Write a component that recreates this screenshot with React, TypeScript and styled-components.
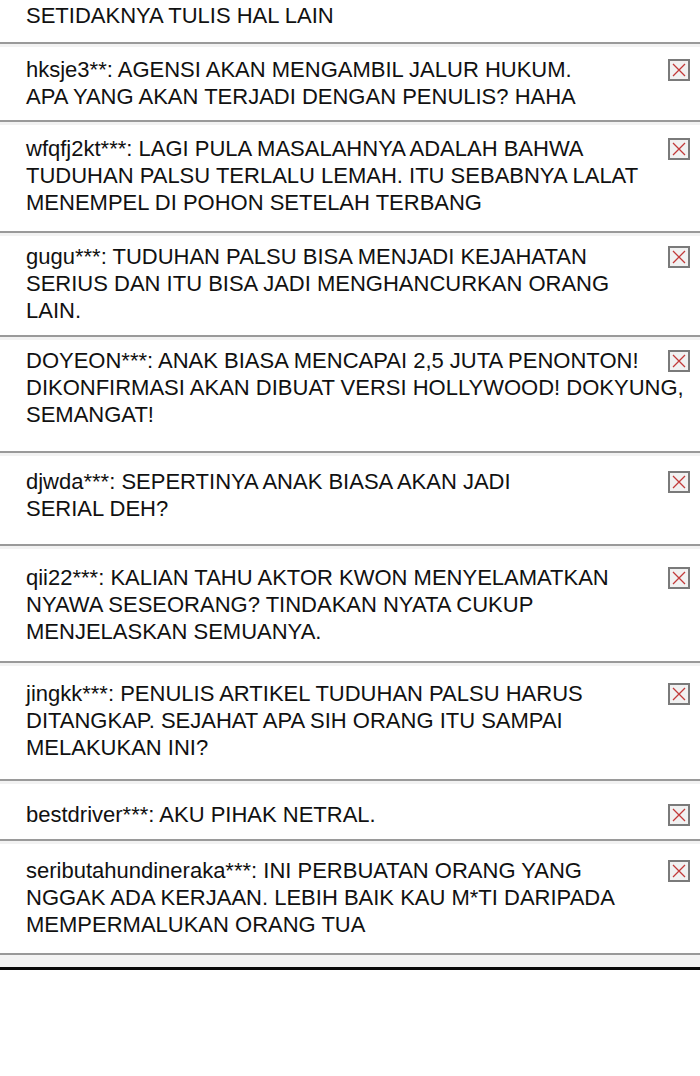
import styled, { createGlobalStyle } from 'styled-components';

const GlobalStyle = createGlobalStyle`
  html, body {
    margin: 0;
    padding: 0;
    background: #ffffff;
  }
  body {
    width: 700px;
    height: 1076px;
    overflow: hidden;
    font-family: "Liberation Sans", Arial, sans-serif;
  }
`;

const List = styled.div`
  display: flex;
  flex-direction: column;
  width: 700px;
`;

const Card = styled.div<{ $top: number; $bottom: number; $strip?: boolean }>`
  background: #ffffff;
  border-top: ${({ $strip }) => ($strip ? '3px solid #f2f2f2' : 'none')};
  padding: ${({ $top, $bottom }) => `${$top}px 10px ${$bottom}px 26px`};
  color: #111111;
  font-size: 22px;
  line-height: 27px;
`;

const Line = styled.div`
  white-space: nowrap;
`;

const Divider = styled.div<{ $heavy?: boolean }>`
  height: ${({ $heavy }) => ($heavy ? '3px' : '2px')};
  background: ${({ $heavy }) => ($heavy ? '#0c0c0c' : '#9a9a9a')};
`;

const Gap = styled.div<{ $h: number }>`
  height: ${({ $h }) => $h}px;
  background: #f4f4f4;
`;

const DeleteBox = styled.span`
  float: right;
  box-sizing: border-box;
  width: 22px;
  height: 22px;
  margin: 3px 0 0 10px;
  border: 2px solid #7a7a7a;
  background: #f1f1f1;
  display: flex;
  align-items: center;
  justify-content: center;
`;

const DeleteIcon = () => (
  <DeleteBox>
    <svg width="16" height="16" viewBox="0 0 16 16">
      <path d="M2 2 L14 14 M14 2 L2 14" stroke="#c23a3a" strokeWidth="1.3" fill="none" />
    </svg>
  </DeleteBox>
);

type Comment = { lines: string[]; top: number; bottom: number };

const comments: Comment[] = [
  {
    lines: ['hksje3**: AGENSI AKAN MENGAMBIL JALUR HUKUM.', 'APA YANG AKAN TERJADI DENGAN PENULIS? HAHA'],
    top: 9,
    bottom: 10,
  },
  {
    lines: [
      'wfqfj2kt***: LAGI PULA MASALAHNYA ADALAH BAHWA',
      'TUDUHAN PALSU TERLALU LEMAH. ITU SEBABNYA LALAT',
      'MENEMPEL DI POHON SETELAH TERBANG',
    ],
    top: 10,
    bottom: 15,
  },
  {
    lines: [
      'gugu***: TUDUHAN PALSU BISA MENJADI KEJAHATAN',
      'SERIUS DAN ITU BISA JADI MENGHANCURKAN ORANG',
      'LAIN.',
    ],
    top: 7,
    bottom: 11,
  },
  {
    lines: [
      'DOYEON***: ANAK BIASA MENCAPAI 2,5 JUTA PENONTON!',
      'DIKONFIRMASI AKAN DIBUAT VERSI HOLLYWOOD! DOKYUNG,',
      'SEMANGAT!',
    ],
    top: 7,
    bottom: 23,
  },
  {
    lines: ['djwda***: SEPERTINYA ANAK BIASA AKAN JADI', 'SERIAL DEH?'],
    top: 12,
    bottom: 22,
  },
  {
    lines: [
      'qii22***: KALIAN TAHU AKTOR KWON MENYELAMATKAN',
      'NYAWA SESEORANG? TINDAKAN NYATA CUKUP',
      'MENJELASKAN SEMUANYA.',
    ],
    top: 15,
    bottom: 16,
  },
  {
    lines: [
      'jingkk***: PENULIS ARTIKEL TUDUHAN PALSU HARUS',
      'DITANGKAP. SEJAHAT APA SIH ORANG ITU SAMPAI',
      'MELAKUKAN INI?',
    ],
    top: 14,
    bottom: 18,
  },
  {
    lines: ['bestdriver***: AKU PIHAK NETRAL.'],
    top: 17,
    bottom: 11,
  },
  {
    lines: [
      'seributahundineraka***: INI PERBUATAN ORANG YANG',
      'NGGAK ADA KERJAAN. LEBIH BAIK KAU M*TI DARIPADA',
      'MEMPERMALUKAN ORANG TUA',
    ],
    top: 13,
    bottom: 15,
  },
];

export default function App() {
  return (
    <>
      <GlobalStyle />
      <List>
        <Card $top={2} $bottom={13}>
          <Line>SETIDAKNYA TULIS HAL LAIN</Line>
        </Card>
        {comments.map((c) => (
          <div key={c.lines[0]}>
            <Divider />
            <Card $strip $top={c.top} $bottom={c.bottom}>
              <DeleteIcon />
              {c.lines.map((l) => (
                <Line key={l}>{l}</Line>
              ))}
            </Card>
          </div>
        ))}
        <Divider />
        <Gap $h={12} />
        <Divider $heavy />
      </List>
    </>
  );
}
